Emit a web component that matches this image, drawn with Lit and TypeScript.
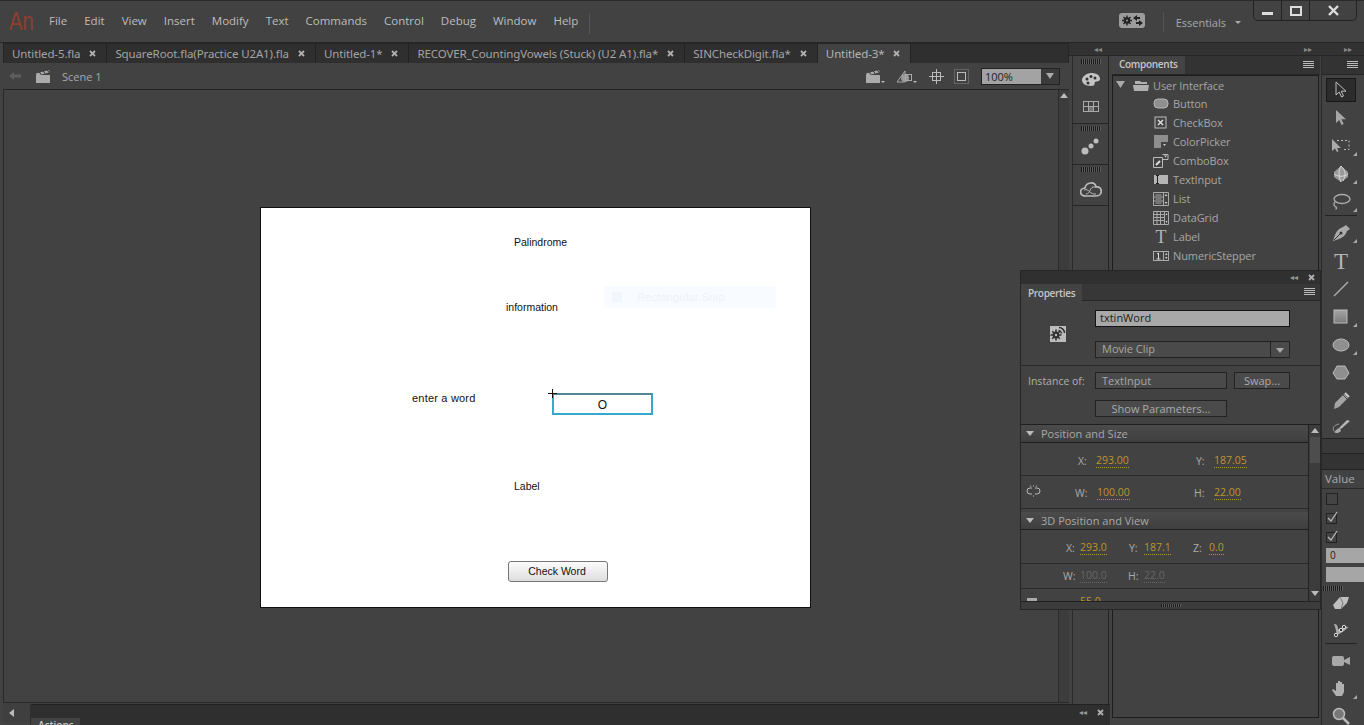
import { LitElement, html, css, svg } from 'lit';
import { customElement } from 'lit/decorators.js';

const MENUS = ['File', 'Edit', 'View', 'Insert', 'Modify', 'Text', 'Commands', 'Control', 'Debug', 'Window', 'Help'];

const TABS = [
  { name: 'Untitled-5.fla' },
  { name: 'SquareRoot.fla(Practice U2A1).fla' },
  { name: 'Untitled-1*' },
  { name: 'RECOVER_CountingVowels (Stuck) (U2 A1).fla*' },
  { name: 'SINCheckDigit.fla*' },
  { name: 'Untitled-3*', active: true },
];

// a string is drawn as a real glyph (the T tool), anything else as svg content
const ic = (body: unknown, w = 20, h = 20) =>
  typeof body === 'string'
    ? html`<span class="glyph">${body}</span>`
    : html`<svg width=${w} height=${h} viewBox="0 0 ${w} ${h}" fill="none">${body}</svg>`;

const COMPONENTS: [string, unknown][] = [
  ['Button', svg`<rect x="1" y="3" width="14" height="9" rx="4" fill="#8f8f8f" stroke="#b5b5b5"/>`],
  ['CheckBox', svg`<rect x="2" y="2" width="11" height="11" fill="#444" stroke="#bbb"/><path d="M5 5l5 5M10 5l-5 5" stroke="#ddd" stroke-width="1.500"/>`],
  ['ColorPicker', svg`<rect x="1" y="1" width="14" height="13" fill="#8e8e8e"/><rect x="8" y="8" width="7" height="6" fill="#444"/><path d="M10 10h3l-1.500 2z" fill="#ccc"/>`],
  ['ComboBox', svg`<path d="M.5 4.500h9v10h-9zM9.500 1.500h5.500v5h-5.500" stroke="#bbb"/><path d="M3 12l4-4" stroke="#ddd" stroke-width="2"/><path d="M11 2.500h3l-1.500 2z" fill="#ccc"/>`],
  ['TextInput', svg`<rect x="1" y="3" width="14" height="9" fill="#b5b5b5"/><path d="M3 3.500h3M3 11.500h3M4.500 4v7" stroke="#222"/>`],
  ['List', svg`<path d="M.5 1.500h15v13H.5zM10.500 1.500v13M.5 6h10M.5 10h10M2.500 8h6M2.500 12h6M2.500 4h6" stroke="#aaa"/><path d="M11.500 5h3L13 3zM11.500 11h3L13 13z" fill="#ccc"/>`],
  ['DataGrid', svg`<path d="M.5 1.500h15v13H.5zM11.500 1.500v13M.5 4.500h11M.5 7.500h11M.5 10.500h11M4 1.500v13M7.500 1.500v13" stroke="#aaa"/><path d="M12.500 5h2L13.500 3zM12.500 11h2L13.500 13z" fill="#ccc"/>`],
  ['Label', 'T'],
  ['NumericStepper', svg`<rect x=".5" y="3.500" width="15" height="9" stroke="#aaa"/><path d="M10.500 3.500v9" stroke="#aaa"/><path d="M4 6l1.500-1v6M3.500 11h4" stroke="#ddd"/><path d="M12 7h2.500l-1.250-2zM12 9h2.500l-1.250 2z" fill="#ccc"/>`],
];

type Tool = { icon: unknown; more?: boolean; on?: boolean; line?: boolean; cls?: string };

const TOOLS_TOP: Tool[] = [
  { on: true, icon: svg`<path d="M5 2v13l3.200-3 2.300 5 2-1-2.300-4.800H15z" stroke="#bdbdbd" fill="#2d2d2d"/>` },
  { icon: svg`<path d="M5 2v13l3.200-3 2.300 5 2.200-1-2.300-4.800H15z" fill="#a6a6a6"/>` },
  { more: true, icon: svg`<path d="M1 3v12l3-2.500L6 16l1.500-.7-1.500-3.300h4z" fill="#aaa"/><path d="M6 4.500h12v9h-6" stroke="#bbb" stroke-dasharray="2 2"/>` },
  { more: true, icon: svg`<path d="M10 2l7 6v5l-7 5-7-5V8z" fill="#9a9a9a"/><path d="M3 10c4 3 10 3 14 0M10 2c-3 5-2 11 0 16M10 2c5 5 5 9 2 15" stroke="#d8d8d8"/>` },
  { more: true, line: true, icon: svg`<ellipse cx="11" cy="7" rx="8" ry="4.500" stroke="#aaa" stroke-width="1.400"/><path d="M4 10c-2 2-1 4 1 5 1 .6.5 2-.5 2" stroke="#aaa" stroke-width="1.400"/>` },
  { more: true, icon: svg`<path d="M15 2l4 4-3 2c-1 3-3 6-8 8l-6 2 2-6c2-5 5-7 8-8z" fill="#aaa"/><path d="M3 17l6-6" stroke="#333"/><circle cx="10" cy="10" r="1.500" fill="#333"/>` },
  { icon: 'T' },
  { icon: svg`<path d="M3 17L17 3" stroke="#aaa" stroke-width="1.500"/>` },
  { more: true, icon: svg`<defs><linearGradient id="g" x1="0" y1="0" x2="0" y2="1"><stop offset="0" stop-color="#a4a4a4"/><stop offset="1" stop-color="#7c7c7c"/></linearGradient></defs><rect x="3" y="3" width="13" height="13" fill="url(#g)" stroke="#bbb"/>` },
  { more: true, icon: svg`<ellipse cx="10" cy="10" rx="8" ry="6" fill="#8f8f8f" stroke="#bbb"/>` },
  { icon: svg`<path d="M6 3h8l4 7-4 6H6l-4-6z" fill="#8f8f8f" stroke="#bbb"/>` },
  { icon: svg`<path d="M3 18l1-6L13 3l4 4-9 9z" fill="#a4a4a4"/><path d="M12 4l4 4" stroke="#444"/><path d="M14 2l4 4" stroke="#ccc" stroke-width="2"/>` },
  { icon: svg`<path d="M19 2l-9 8-2-1 8-8z" fill="#b5b5b5"/><path d="M9 9c-3 0-4 3-6 4 2 2 5 1 7-1z" fill="#aaa"/><path d="M3 12C1 9 3 6 8 5" stroke="#999"/>` },
];

const TOOLS_BOTTOM: Tool[] = [
  { cls: 'eraser', icon: svg`<path d="M2 13l7-8h9l-2 6-6 6H4z" fill="#c0c0c0"/><path d="M9 5l3 6-2 6" stroke="#777"/>` },
  { cls: 'bone', line: true, icon: svg`<path d="M3 4c3 0 4 2 4 5l3 1 3-3c2-2 3 0 5 1-2-.5-3 1-5 3l-3 2-4 2c-1-3-1-6-3-11z" fill="#aaa"/><circle cx="5" cy="15" r="1.700" fill="#333" stroke="#ddd"/><circle cx="10" cy="10" r="1.700" fill="#333" stroke="#ddd"/><circle cx="13" cy="7" r="1.700" fill="#333" stroke="#ddd"/>` },
  { cls: 'camera', icon: svg`<rect x="1" y="5" width="12" height="10" rx="2" fill="#a8a8a8"/><path d="M13 9l6-3v8l-6-3z" fill="#a8a8a8"/>` },
  { more: true, icon: svg`<path d="M5 17l-4-6 1-1 3 2V4h2v5V2h2v7V3h2v6V5h2v8l-2 4z" fill="#b0b0b0"/>` },
  { icon: svg`<circle cx="8" cy="7" r="5.500" fill="#777" stroke="#bbb" stroke-width="1.500"/><path d="M12 11l6 6" stroke="#bbb" stroke-width="2.500"/>` },
];

@customElement('app-root')
export class AppRoot extends LitElement {
  static styles = css`
    :host {
      display: block;
      width: 1364px;
      height: 725px;
      overflow: hidden;
      position: relative;
      background: #424242;
      color: #b4b4b4;
      font-family: 'Open Sans', 'Noto Sans', sans-serif;
      font-size: 11px;
    }
    svg { display: block; flex: none; }
    .glyph { font-family: 'Liberation Serif', serif; color: #b5b5b5; text-align: center; line-height: 1; flex: none; }
    .tool .glyph { font-size: 23px; }
    .row .glyph { font-size: 18px; width: 16px; }

    /* title bar */
    .title {
      height: 43px;
      display: flex;
      align-items: flex-start;
      border-top: 1px solid #2a2a2a;
      background: #424242;
      box-sizing: border-box;
      border-bottom: 1px solid #262626;
    }
    .logo {
      font: 26px/1 'Liberation Sans', sans-serif;
      color: #8f3e2e;
      margin: 7px 0 0 9px;
      width: 32px;
      transform: scaleX(0.78);
      transform-origin: left;
    }
    .menus { display: flex; gap: 17px; margin: 12px 0 0 8px; padding-right: 11px; height: 21px; border-right: 1px solid #555; font-size: 11.500px; color: #bdbdbd; }
    .spacer { flex: 1; }
    .sync { margin: 12px 18px 0 0; width: 26px; height: 15px; border-radius: 3px; background: #9c9c9c; }
    .essentials { display: flex; align-items: center; gap: 9px; border-left: 1px solid #555; margin-top: 11px; height: 20px; padding-left: 12px; color: #a9a9a9; font-size: 11px; }
    .caret-s { width: 0; height: 0; border: 3px solid transparent; border-top: 3px solid #aaa; border-bottom: 0; }
    .win { display: flex; margin: 0 7px 0 12px; height: 19px; border: 1px solid #222; border-top: 0; border-radius: 0 0 5px 5px; }
    .win div { display: flex; align-items: center; justify-content: center; border-left: 1px solid #222; width: 27px; }
    .win div:first-child { border-left: 0; }
    .win div:last-child { width: 46px; }

    .main { display: flex; height: 682px; }

    /* documents */
    .doc { margin-left: 3px; width: 1066px; flex: none; display: flex; flex-direction: column; }
    .tabs { height: 20px; flex: none; display: flex; background: #2f2f2f; border: 1px solid #262626; border-bottom: 0; box-sizing: border-box; }
    .tab { display: flex; align-items: center; gap: 8px; padding: 0 9px 0 8px; border-right: 1px solid #222; color: #a4a4a4; font: 11.500px 'Noto Sans', sans-serif; letter-spacing: -0.120px; white-space: nowrap; }
    .tab.active { background: #424242; color: #b6b6b6; }
    .bar { height: 27px; flex: none; display: flex; align-items: center; background: #424242; border-bottom: 1px solid #252525; box-sizing: border-box; padding-left: 5px; }
    .back { margin-right: 13px; }
    .scene { margin: 1px 0 0 11px; font-size: 11px; color: #a8a8a8; }
    .bar-tools { display: flex; align-items: center; gap: 10px; margin-left: auto; }
    .zoom-box { display: flex; width: 79px; height: 17px; margin: 0 9px 0 2px; border: 1px solid #222; box-sizing: border-box; }
    .zoom-pct { flex: 1; background: #a3a3a3; color: #222; padding-left: 3px; line-height: 15px; font-size: 11px; }
    .zoom-btn { width: 18px; display: flex; align-items: center; justify-content: center; background: #3b3b3b; }
    .tri { width: 0; height: 0; border: 4px solid transparent; border-top: 6px solid #aaa; border-bottom: 0; }

    .work { height: 612px; flex: none; display: flex; }
    .board { flex: 1; position: relative; background: #424242; border-left: 1px solid #2a2a2a; }
    .vscroll { width: 11px; background: #3c3c3c; border-left: 1px solid #2c2c2c; display: flex; justify-content: center; padding-top: 3px; box-sizing: border-box; }
    .up { width: 0; height: 0; border: 4px solid transparent; border-bottom: 5px solid #bbb; border-top: 0; }
    .hscroll { height: 20px; flex: none; border-top: 1px solid #2a2a2a; background: #3f3f3f; padding: 6px 0 0 6px; box-sizing: border-box; }
    .left { width: 0; height: 0; border: 4px solid transparent; border-right: 5px solid #bbb; border-left: 0; }

    /* stage */
    .stage { position: absolute; left: 257px; top: 118px; width: 549px; height: 399px; background: #fff; box-shadow: 0 0 0 1px #111; color: #111; font: 10.500px/14px 'Liberation Sans', sans-serif; }
    .stage > * { position: absolute; white-space: nowrap; }
    .t1 { left: 253px; top: 27px; }
    .t2 { left: 245px; top: 92px; }
    .t3 { left: 151px; top: 183px; font-size: 11px; letter-spacing: 0.200px; }
    .t4 { left: 253px; top: 271px; }
    .snip { left: 343px; top: 78px; width: 172px; height: 22px; background: #f8fbff; color: #eef2f7; font-size: 11px; line-height: 22px; box-sizing: border-box; padding-left: 33px; letter-spacing: 0.200px; }
    .snip::before { content: ''; position: absolute; left: 8px; top: 6px; width: 10px; height: 10px; background: #f1f6fc; }
    .input { left: 291px; top: 185px; width: 101px; height: 22px; box-sizing: border-box; border: 2px solid #35a8cc; border-top-color: #50879b; text-align: center; font-size: 12px; line-height: 20px; }
    .cross { left: 287px; top: 181px; }
    .check { left: 247px; top: 353px; width: 100px; height: 21px; box-sizing: border-box; border: 1px solid #777; border-radius: 3px; background: linear-gradient(#fbfbfb, #dedede); text-align: center; line-height: 19px; font-size: 10.500px; padding-right: 2px; }

    /* right dock */
    .dock { width: 295px; flex: none; height: 682px; overflow: hidden; display: flex; flex-direction: column; }
    .dock-head { height: 13px; flex: none; background: #323232; display: flex; align-items: center; border-bottom: 1px solid #262626; box-sizing: border-box; font: 8px 'Liberation Sans', sans-serif; color: #888; }
    .dock-head span:nth-child(1) { margin-left: 25px; }
    .dock-head span:nth-child(2) { margin-left: 202px; }
    .dock-head span:nth-child(3) { margin-left: 32px; }
    .dock-body { flex: 1; min-height: 0; display: flex; }
    .icons { width: 37px; flex: none; margin-left: 3px; border-right: 1px solid #222; border-left: 1px solid #2a2a2a; display: flex; flex-direction: column; box-sizing: border-box; }
    .grp { display: flex; flex-direction: column; align-items: center; border-bottom: 1px solid #262626; padding-top: 3px; }
    .g1 { padding-bottom: 11px; }
    .g2 { padding-top: 2px; padding-bottom: 9px; }
    .g3 { padding-top: 2px; padding-bottom: 7px; }
    .g1 .pal { margin-top: 7px; }
    .g1 .mix { margin-top: 12px; }
    .g2 .dots { margin-top: 6px; }
    .g3 .cc { margin-top: 8px; }
    .grip { width: 20px; height: 5px; flex: none; background: repeating-linear-gradient(90deg, #1c1c1c 0 1px, #5a5a5a 1px 2px); }

    .comps { width: 208px; flex: none; margin-left: 3px; display: flex; flex-direction: column; height: 662px; }
    .panel-tabs { height: 19px; flex: none; display: flex; justify-content: space-between; align-items: center; background: #333; box-sizing: border-box; border-bottom: 1px solid #262626; }
    .panel-tab { height: 18px; line-height: 17px; padding: 0 7px; background: #434343; color: #c6c6c6; font-size: 10px; font-weight: 600; letter-spacing: -0.300px; }
    .burger { width: 11px; height: 8px; margin-right: 6px; background: repeating-linear-gradient(#bbb 0 1px, transparent 1px 2px); }
    .tree { flex: 1; border: 1px solid #1d1d1d; margin-right: 1px; box-sizing: border-box; }
    .row { height: 19px; display: flex; align-items: center; font-size: 11px; letter-spacing: -0.100px; color: #a6a6a6; padding-left: 40px; gap: 4px; }
    .row.root { height: 18px; padding-left: 3px; }
    .row.root svg:first-child { margin-right: 4px; }

    .tools { flex: 1; border-left: 1px solid #2a2a2a; display: flex; flex-direction: column; margin-left: 1px; min-width: 0; }
    .tools .panel-tabs { justify-content: flex-end; }
    .tool { position: relative; width: 38px; height: 28px; flex: none; display: flex; align-items: center; justify-content: center; box-sizing: border-box; }
    .tool.on { width: 30px; height: 24px; margin: 1px 4px 2px; background: #2c2c2c; border: 1px solid #181818; }
    .tool.line::after { content: ''; position: absolute; left: 3px; right: 3px; bottom: 0; height: 1px; background: #242424; }
    .tool.line { margin-bottom: 3px; }
    .tool.more::before { content: ''; position: absolute; right: 3px; bottom: 4px; border: 2px solid transparent; border-right-color: #aaa; border-bottom-color: #aaa; }
    .tool.eraser { height: 16px; }
    .tool.bone { margin: 6px 0 3px; }
    .tools-list { height: 361px; overflow: hidden; flex: none; margin-top: 2px; }
    .stub { height: 32px; flex: none; background: linear-gradient(#393939 0 14px, #222 14px 15px, #333 15px); border-top: 1px solid #222; border-bottom: 1px solid #222; box-sizing: border-box; }
    .value-col { height: 116px; flex: none; box-sizing: border-box; }
    .value-head { height: 18px; padding-left: 3px; line-height: 18px; border-bottom: 1px solid #2a2a2a; font-size: 11.500px; color: #aaa; }
    .cell { height: 19px; display: flex; align-items: center; padding-left: 4px; }
    .chk { width: 10px; height: 10px; border: 1px solid #222; background: #444; }
    .fill { width: 100%; height: 15px; background: #a6a6a6; color: #222; font-size: 10px; line-height: 15px; padding-left: 4px; box-sizing: border-box; }
    .tools .grip { margin: 0 0 3px 1px; }

    /* floating panels */
    .props { position: absolute; left: 1020px; top: 270px; width: 301px; height: 340px; background: #424242; border: 1px solid #262626; box-sizing: border-box; display: flex; flex-direction: column; }
    .props-head { height: 13px; flex: none; background: #303030; display: flex; justify-content: flex-end; align-items: center; gap: 9px; padding-right: 4px; font: 8px 'Liberation Sans', sans-serif; color: #999; }
    .props .panel-tabs { height: 17px; background: #373737; }
    .props .panel-tab { height: 17px; line-height: 18px; }
    .props .burger { margin-right: 5px; }
    .identity { flex: none; height: 65px; display: grid; grid-template-columns: 74px 195px; grid-template-rows: 17px 17px; row-gap: 14px; padding-top: 9px; border-bottom: 1px solid #2a2a2a; box-sizing: border-box; }
    .gear { grid-row: 1 / 3; align-self: center; justify-self: end; margin-right: 29px; }
    .name { background: #a8a8a8; color: #222; border: 1px solid #141414; line-height: 13px; padding-left: 4px; font-size: 11px; box-sizing: border-box; }
    .drop { display: flex; align-items: center; justify-content: space-between; border: 1px solid #222; background: #4a4a4a; color: #a8a8a8; padding: 0 4px 0 6px; font-size: 11px; box-sizing: border-box; }
    .drop span { margin-top: -2px; }
    .inst { flex: none; display: grid; grid-template-columns: 60px 132px 56px; column-gap: 7px; padding: 6px 0 0 7px; color: #b0b0b0; align-items: center; height: 59px; box-sizing: border-box; grid-auto-rows: 17px; row-gap: 11px; border-bottom: 1px solid #1f1f1f; }
    .inst-label { white-space: nowrap; font-size: 10.500px; }
    .field { height: 17px; line-height: 15px; border: 1px solid #222; background: #4a4a4a; box-sizing: border-box; padding-left: 6px; color: #a8a8a8; }
    .btn { height: 17px; line-height: 15px; border: 1px solid #222; background: #4a4a4a; box-sizing: border-box; text-align: center; color: #aaa; }
    .show { grid-column: 2; }
    .scrollarea { flex: 1; display: flex; min-height: 0; overflow: hidden; }
    .sections { flex: 1; overflow: hidden; }
    .sec { height: 18px; display: flex; align-items: center; gap: 7px; padding-left: 5px; background: linear-gradient(#4b4b4b, #3f3f3f); border-bottom: 1px solid #1f1f1f; color: #a8a8a8; font-size: 11px; box-sizing: border-box; }
    .sec.next { margin-top: 3px; }
    .tri-s { width: 0; height: 0; border: 4px solid transparent; border-top: 5px solid #bbb; border-bottom: 0; }
    .xy { position: relative; display: grid; align-items: center; justify-items: start; border-bottom: 1px solid #2a2a2a; box-sizing: border-box; font-size: 10.500px; color: #aaa; }
    .r1 { height: 33px; padding: 4px 0 0 57px; grid-template-columns: 18px 100px 18px auto; }
    .r2 { height: 33px; padding: 2px 0 0 54px; grid-template-columns: 22px 97px 20px auto; }
    .r3 { height: 34px; padding: 2px 0 0 45px; grid-template-columns: 14px 49px 15px 49px 16px auto; }
    .r4 { height: 25px; padding: 0 0 1px 42px; grid-template-columns: 17px 48px 16px auto; }
    .r5 { height: 20px; padding: 6px 0 0 59px; align-items: start; }
    .num { color: #bd952c; border-bottom: 1px dotted #bd952c; line-height: 13px; }
    .num.dim { color: #666; border-bottom-color: #666; }
    .link { position: absolute; left: 5px; top: 9px; }
    .rot { position: absolute; left: 5px; top: 7px; }
    .sbar { width: 12px; flex: none; border-left: 1px solid #222; background: #3c3c3c; display: flex; flex-direction: column; align-items: center; padding-top: 3px; box-sizing: border-box; }
    .thumb { width: 10px; height: 26px; margin-top: 4px; background: #4d4d4d; }
    .dn { margin-top: auto; margin-bottom: 5px; width: 0; height: 0; border: 4px solid transparent; border-top: 5px solid #bbb; border-bottom: 0; }
    .props-foot { height: 7px; flex: none; display: flex; justify-content: center; align-items: center; border-top: 1px solid #222; background: #3c3c3c; }
    .props-foot .grip { height: 3px; }

    .actions { position: absolute; left: 30px; top: 704px; width: 1080px; height: 21px; background: #2f2f2f; border-radius: 3px 0 0 0; border-top: 1px solid #222; box-sizing: border-box; display: flex; justify-content: flex-end; gap: 9px; padding: 3px 5px 0 0; font: 8px 'Liberation Sans', sans-serif; color: #999; }
    .actions-tab { position: absolute; left: 1px; top: 13px; width: 49px; height: 8px; background: #434343; color: #c6c6c6; font: 600 10px/14px 'Open Sans', sans-serif; padding-left: 7px; box-sizing: border-box; overflow: hidden; }
  `;

  private closeMark() {
    return ic(svg`<path d="M2 2l5 5M7 2L2 7" stroke="#b0b0b0" stroke-width="1.800"/>`, 9, 9);
  }

  private toolClass(t: Tool) {
    return `tool ${t.on ? 'on' : ''} ${t.more ? 'more' : ''} ${t.line ? 'line' : ''} ${t.cls ?? ''}`;
  }

  private clapper() {
    return svg`<path d="M1 7h14v8H1z" fill="#ababab"/><path d="M1 5.500l13-3.500.6 2.200-13 3.500z" fill="#ababab"/><path d="M4 3.500l2 3M8 2.500l2 3M12 1.500l2 3" stroke="#333"/>`;
  }

  private renderTitle() {
    return html`
      <div class="title">
        <div class="logo">An</div>
        <div class="menus">${MENUS.map((m) => html`<span>${m}</span>`)}</div>
        <div class="spacer"></div>
        <div class="sync">${ic(svg`<circle cx="8" cy="7.500" r="3.200" fill="#222"/><path d="M8 2.500v10M3 7.500h10M4.500 4l7 7M11.500 4l-7 7" stroke="#222" stroke-width="1.400"/><circle cx="8" cy="7.500" r="1" fill="#9c9c9c"/><path d="M14 5l4-3v2h3v2h-3v2zM24 10l-4 3v-2h-3V9h3V7z" fill="#222"/>`, 26, 15)}</div>
        <div class="essentials">Essentials <span class="caret-s"></span></div>
        <div class="win">
          <div>${ic(svg`<rect x="0" y="7" width="11" height="3" fill="#ddd"/>`, 11, 12)}</div>
          <div>${ic(svg`<rect x="1" y="2" width="10" height="8" stroke="#ddd" stroke-width="2"/>`, 12, 12)}</div>
          <div>${ic(svg`<path d="M2 1l9 9M11 1l-9 9" stroke="#ddd" stroke-width="2.400"/>`, 13, 11)}</div>
        </div>
      </div>
    `;
  }

  private renderDoc() {
    return html`
      <div class="doc">
        <div class="tabs">
          ${TABS.map((t) => html`
            <div class="tab ${t.active ? 'active' : ''}">${t.name}${this.closeMark()}</div>
          `)}
        </div>
        <div class="bar">
          <span class="back">${ic(svg`<path d="M1 6l5-4v2.500h7v3H6V10z" fill="#5e5e5e"/>`, 14, 12)}</span>
          ${ic(this.clapper(), 16, 16)}
          <span class="scene">Scene 1</span>
          <div class="bar-tools">
            ${ic(svg`${this.clapper()}<path d="M16 13h4l-2 2z" fill="#bbb"/>`, 21, 16)}
            ${ic(svg`<path d="M1 14L9 3v11z" stroke="#aaa"/><circle cx="9" cy="10" r="4" fill="#9a9a9a"/><rect x="9.500" y="6.500" width="6" height="6" stroke="#aaa"/><path d="M17 13h4l-2 2z" fill="#bbb"/>`, 23, 16)}
            ${ic(svg`<rect x="3.500" y="3.500" width="8" height="8" stroke="#bbb"/><path d="M7.500 0v15M0 7.500h15" stroke="#bbb"/>`, 15, 15)}
            ${ic(svg`<rect x=".5" y=".5" width="14" height="14" stroke="#888" stroke-dasharray="1 1"/><rect x="3.500" y="3.500" width="8" height="8" stroke="#bbb"/>`, 15, 15)}
            <div class="zoom-box"><span class="zoom-pct">100%</span><div class="zoom-btn"><div class="tri"></div></div></div>
          </div>
        </div>
        <div class="work">
          <div class="board">
            <div class="stage">
              <span class="t1">Palindrome</span>
              <span class="t2">information</span>
              <span class="snip">Rectangular Snip</span>
              <span class="t3">enter a word</span>
              <span class="input">O</span>
              <span class="cross">${ic(svg`<path d="M4.500 0v9M0 4.500h9" stroke="#111"/>`, 9, 9)}</span>
              <span class="t4">Label</span>
              <span class="check">Check Word</span>
            </div>
          </div>
          <div class="vscroll"><span class="up"></span></div>
        </div>
        <div class="hscroll"><div class="left"></div></div>
      </div>
    `;
  }

  private renderDock() {
    return html`
      <div class="dock">
        <div class="dock-head"><span>◂◂</span><span>▸▸</span><span>▸▸</span></div>
        <div class="dock-body">
          <div class="icons">
            <div class="grp g1">
              <div class="grip"></div>
              <span class="pal">${ic(svg`<path d="M11 2c5 0 9 2 9 6 0 3-4 2-5 3s1 4-4 4C5 15 2 12 2 9s4-7 9-7z" fill="#c4c4c4"/><circle cx="7" cy="8" r="1.500" fill="#333"/><circle cx="11" cy="5.500" r="1.500" fill="#333"/><circle cx="15" cy="7" r="1.500" fill="#333"/><circle cx="8" cy="12" r="1.500" fill="#333"/>`, 22, 18)}</span>
              <span class="mix">${ic(svg`<rect x=".5" y=".5" width="15" height="10" stroke="#aaa"/><path d="M.5 5.500h15M5.500 .5v10M10.500 .5v10" stroke="#aaa"/><rect x="6" y="6" width="4" height="4" fill="#777"/>`, 16, 11)}</span>
            </div>
            <div class="grp g2">
              <div class="grip"></div>
              <span class="dots">${ic(svg`<circle cx="4" cy="14" r="3.500" fill="#bdbdbd"/><circle cx="10" cy="9" r="2.500" fill="#bdbdbd"/><circle cx="15" cy="4" r="2.500" fill="#bdbdbd"/>`, 20, 18)}</span>
            </div>
            <div class="grp g3">
              <div class="grip"></div>
              <span class="cc">${ic(svg`<path d="M6 16c-7 0-7-8-1-8 1-6 10-7 11-1 7-1 7 9 0 9z" stroke="#bbb" stroke-width="1.700"/><path d="M6 14c5 0 3-8 9-7M4 10c5-2 6 5 12 4" stroke="#bbb"/>`, 22, 18)}</span>
            </div>
          </div>
          <div class="comps">
            <div class="panel-tabs"><div class="panel-tab">Components</div><div class="burger"></div></div>
            <div class="tree">
              <div class="row root">
                ${ic(svg`<path d="M0 0h9L4.500 7z" fill="#aaa"/>`, 9, 8)}
                ${ic(svg`<path d="M2 3h5l1 1h6v2H2zM0 7h16l-1 6H1z" fill="#b0b0b0"/>`, 16, 14)}
                <span>User Interface</span>
              </div>
              ${COMPONENTS.map(([name, icon]) => html`<div class="row">${ic(icon, 16, 16)}<span>${name}</span></div>`)}
            </div>
          </div>
          ${this.renderTools()}
        </div>
      </div>
    `;
  }

  private renderTools() {
    const check = svg`<rect x=".5" y="2.500" width="10" height="10" stroke="#222" fill="#444"/><path d="M2 7l3 3 6-9" stroke="#bbb" stroke-width="1.200"/>`;
    return html`
      <div class="tools">
        <div class="panel-tabs"><div class="burger"></div></div>
        <div class="tools-list">
          ${TOOLS_TOP.map((t) => html`<div class=${this.toolClass(t)}>${ic(t.icon)}</div>`)}
        </div>
        <div class="stub"></div>
        <div class="value-col">
          <div class="value-head">Value</div>
          <div class="cell"><span class="chk"></span></div>
          <div class="cell">${ic(check, 12, 13)}</div>
          <div class="cell">${ic(check, 12, 13)}</div>
          <div class="cell"><div class="fill">0</div></div>
          <div class="cell"><div class="fill"></div></div>
        </div>
        <div class="grip"></div>
        ${TOOLS_BOTTOM.map((t) => html`<div class=${this.toolClass(t)}>${ic(t.icon)}</div>`)}
      </div>
    `;
  }

  private renderProps() {
    return html`
      <div class="props">
        <div class="props-head"><span>◂◂</span>${this.closeMark()}</div>
        <div class="panel-tabs"><div class="panel-tab">Properties</div><div class="burger"></div></div>
        <div class="identity">
          <div class="gear">${ic(svg`<rect width="16" height="16" fill="#bdbdbd"/><path d="M9 1.500c3 0 5.500 2.500 5.500 5.500M8.500 4.500c1.500 0 3 1.500 3 3" stroke="#333" stroke-width="1.500"/><circle cx="6" cy="9" r="3.400" fill="#333"/><path d="M6 3.500v11M.5 9h11M2.200 5.200l7.600 7.600M9.800 5.200l-7.600 7.600" stroke="#333" stroke-width="1.600"/><circle cx="6" cy="9" r="1.200" fill="#bbb"/>`, 16, 16)}</div>
          <div class="name">txtinWord</div>
          <div class="drop"><span>Movie Clip</span>${ic(svg`<path d="M.5 0v15" stroke="#222"/><path d="M6 6h8l-4 5z" fill="#aaa"/>`, 15, 15)}</div>
        </div>
        <div class="inst">
          <span class="inst-label">Instance of:</span>
          <div class="field">TextInput</div>
          <div class="btn">Swap...</div>
          <div class="btn show">Show Parameters...</div>
        </div>
        <div class="scrollarea">
          <div class="sections">
            <div class="sec"><span class="tri-s"></span>Position and Size</div>
            <div class="xy r1"><span>X:</span><span class="num">293.00</span><span>Y:</span><span class="num">187.05</span></div>
            <div class="xy r2">
              <span class="link">${ic(svg`<path d="M6 3H4a3 3 0 0 0 0 6h2M9 3h2a3 3 0 0 1 0 6H9" stroke="#bbb"/><path d="M7.500 0v2M7.500 10v2M4 0l1 2M11 0l-1 2" stroke="#888"/>`, 15, 13)}</span>
              <span>W:</span><span class="num">100.00</span><span>H:</span><span class="num">22.00</span>
            </div>
            <div class="sec next"><span class="tri-s"></span>3D Position and View</div>
            <div class="xy r3"><span>X:</span><span class="num">293.0</span><span>Y:</span><span class="num">187.1</span><span>Z:</span><span class="num">0.0</span></div>
            <div class="xy r4"><span>W:</span><span class="num dim">100.0</span><span>H:</span><span class="num dim">22.0</span></div>
            <div class="xy r5">
              <span class="rot">${ic(svg`<rect x="1" y="2" width="10" height="6" fill="#aaa"/>`, 12, 8)}</span>
              <span class="num">55.0</span>
            </div>
          </div>
          <div class="sbar"><span class="up"></span><div class="thumb"></div><span class="dn"></span></div>
        </div>
        <div class="props-foot"><div class="grip"></div></div>
      </div>
    `;
  }

  render() {
    return html`
      ${this.renderTitle()}
      <div class="main">
        ${this.renderDoc()}
        ${this.renderDock()}
      </div>
      ${this.renderProps()}
      <div class="actions">
        <span>◂◂</span>${this.closeMark()}
        <div class="actions-tab">Actions</div>
      </div>
    `;
  }
}
